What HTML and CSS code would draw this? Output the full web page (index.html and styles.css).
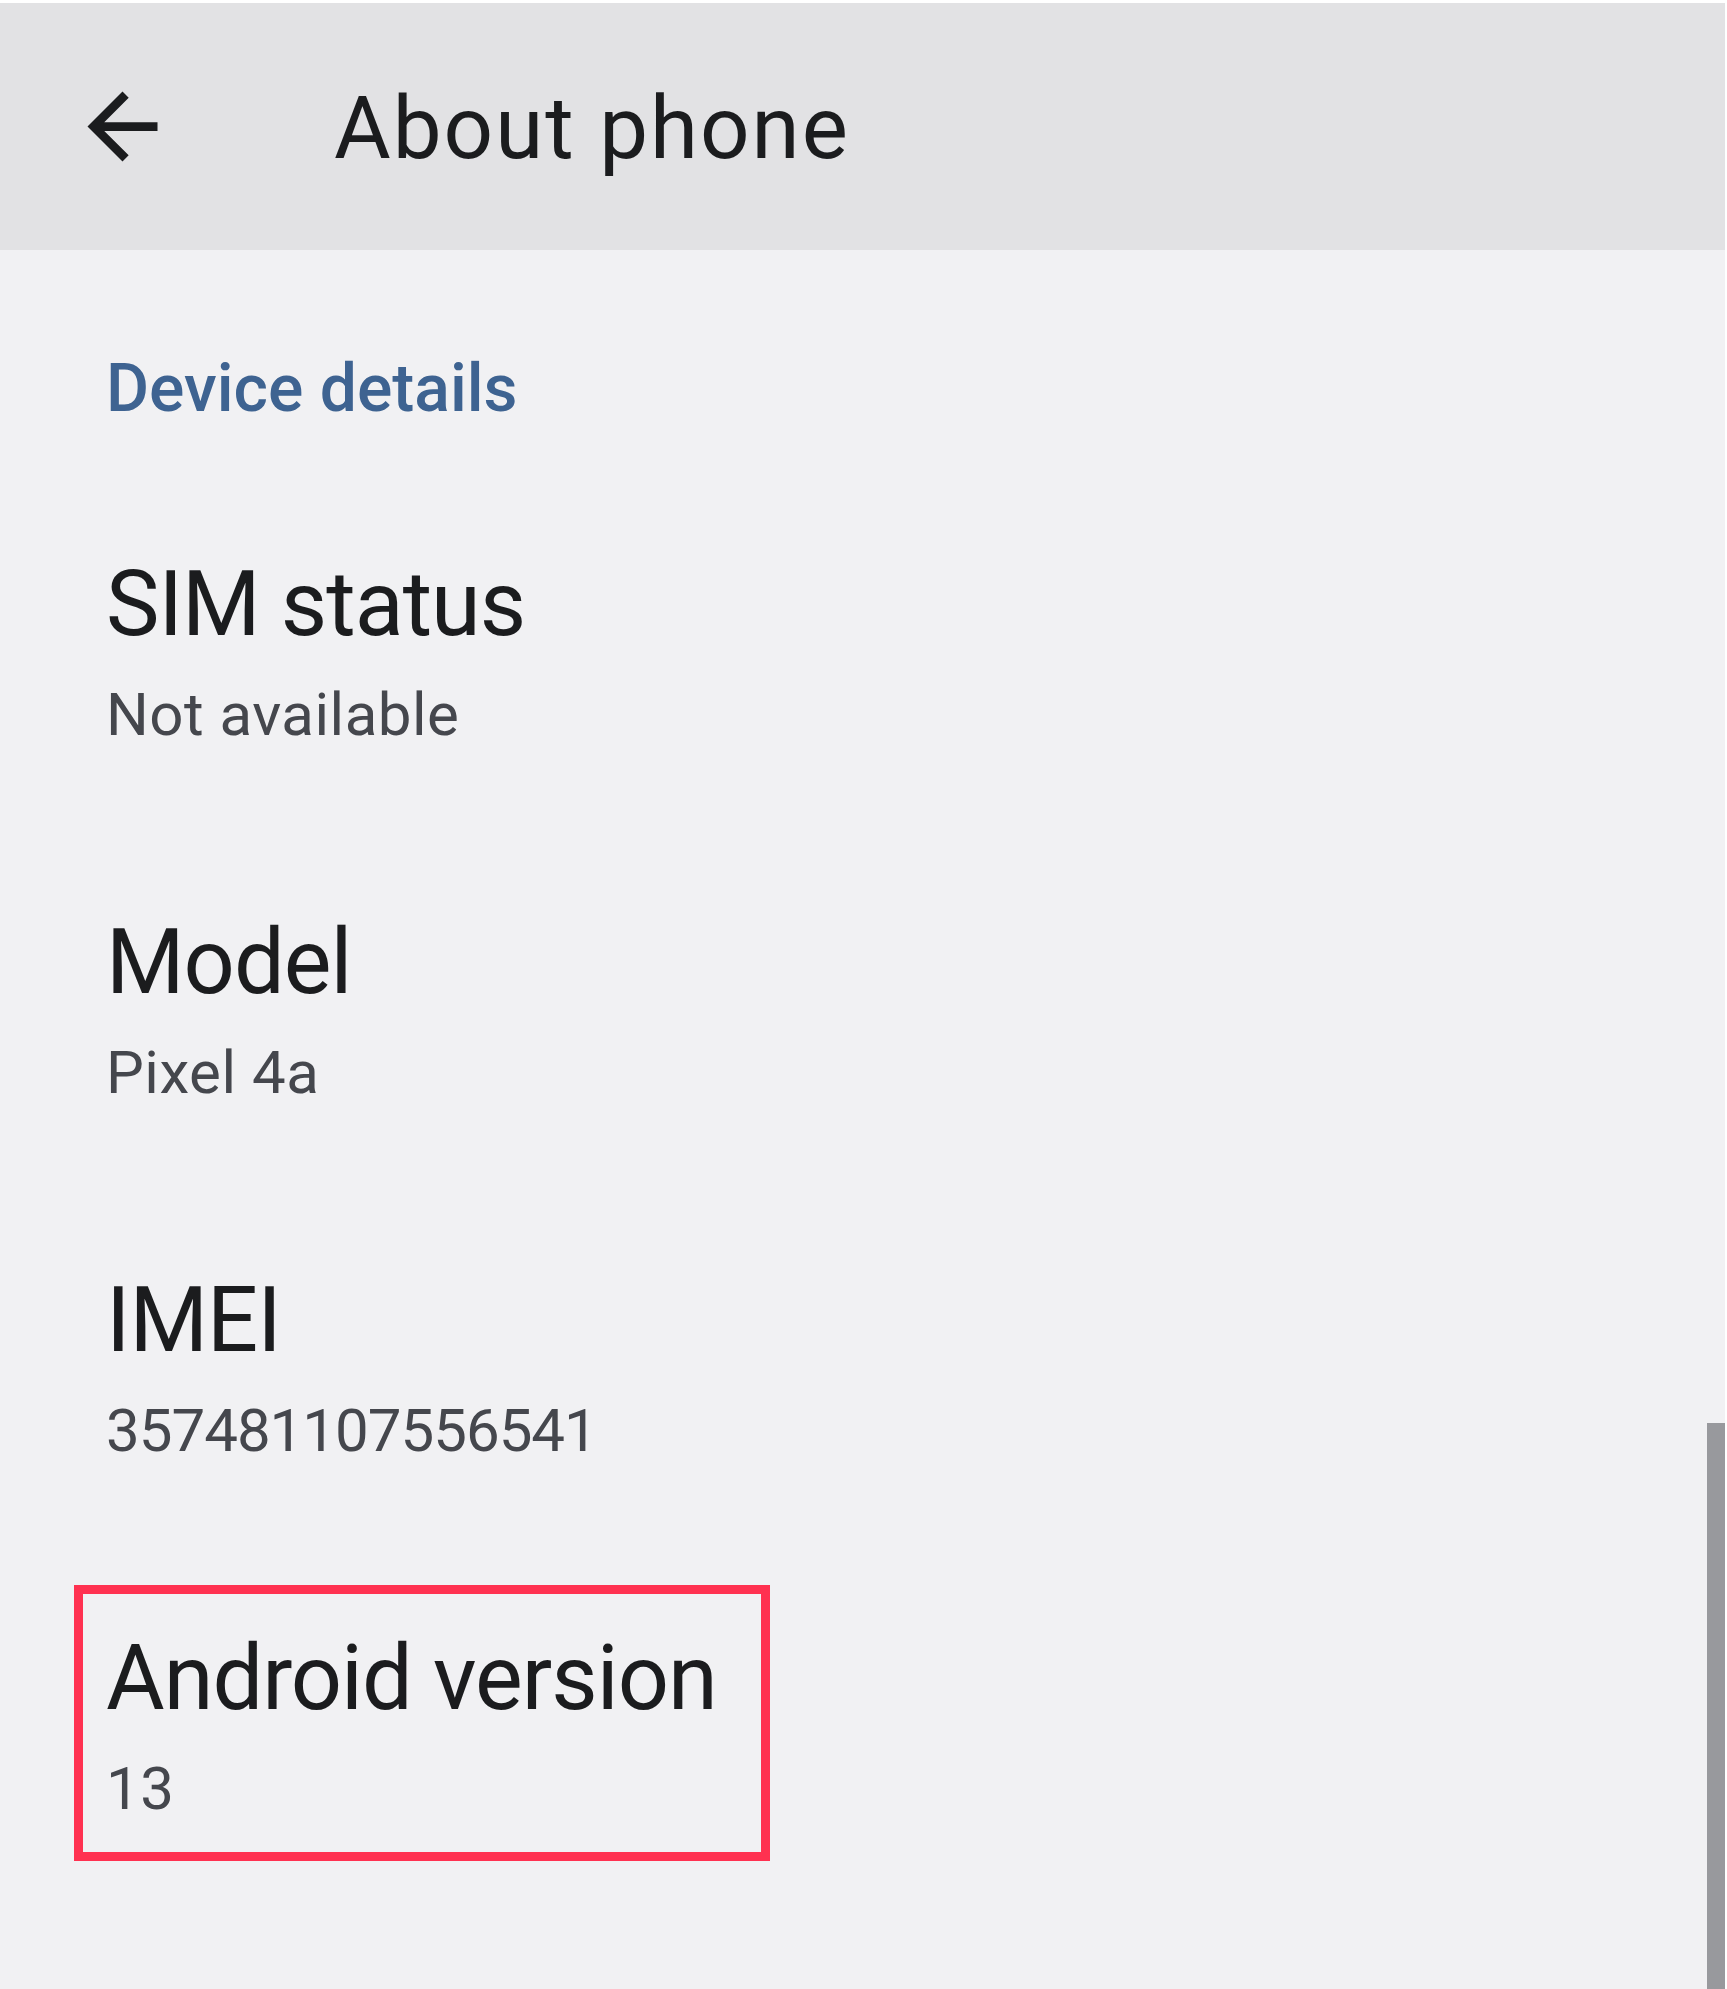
FILE: index.html
```html
<!DOCTYPE html>
<html lang="en">
<head>
<meta charset="utf-8">
<title>About phone</title>
<link rel="stylesheet" href="styles.css">
</head>
<body>
<div class="screen">
  <header class="appbar">
    <button class="back" aria-label="Back">
      <svg viewBox="0 0 24 24" width="105" height="105" aria-hidden="true"><path d="M20 11H7.83l5.59-5.59L12 4l-8 8 8 8 1.41-1.41L7.83 13H20v-2z" fill="#1b1c1e"/></svg>
    </button>
    <h1 class="appbar-title">About phone</h1>
  </header>
  <main class="content">
    <h2 class="category">Device details</h2>
    <ul class="prefs">
      <li class="pref">
        <div class="pref-title">SIM status</div>
        <div class="pref-summary">Not available</div>
      </li>
      <li class="pref">
        <div class="pref-title">Model</div>
        <div class="pref-summary">Pixel 4a</div>
      </li>
      <li class="pref">
        <div class="pref-title">IMEI</div>
        <div class="pref-summary pref-summary-digits">357481107556541</div>
      </li>
      <li class="pref pref-highlight">
        <div class="pref-title">Android version</div>
        <div class="pref-summary">13</div>
      </li>
    </ul>
    <div class="scrollbar"></div>
  </main>
</div>
</body>
</html>
```
FILE: styles.css
```css
html, body {
  margin: 0;
  padding: 0;
  background: #ffffff;
}
body {
  font-family: Roboto, "Noto Sans", "Liberation Sans", sans-serif;
}
.screen {
  margin: 3px 2px 0 0;
  height: 1986px;
  display: flex;
  flex-direction: column;
  overflow: hidden;
}
.appbar {
  height: 247px;
  flex: none;
  background: #e2e2e4;
  display: flex;
  align-items: center;
}
.back {
  width: 105px;
  height: 105px;
  margin-left: 70px;
  padding: 0;
  border: 0;
  background: transparent;
  display: flex;
}
.appbar-title {
  margin: 0 0 0 159px;
  font-size: 87px;
  line-height: 87px;
  font-weight: 400;
  letter-spacing: 2px;
  color: #1b1c1e;
  position: relative;
  top: 2px;
}
.content {
  flex: 1;
  background: #f1f1f3;
  position: relative;
  padding: 94px 0 0 106px;
}
.category {
  margin: 0;
  font-size: 66px;
  line-height: 90px;
  font-weight: 500;
  color: #3e6391;
}
.prefs {
  list-style: none;
  margin: 116px 0 0 0;
  padding: 0;
  display: flex;
  flex-direction: column;
  gap: 153px;
}
.pref {
  position: relative;
}
.pref-title {
  font-size: 90px;
  line-height: 110px;
  letter-spacing: -1px;
  color: #1b1c1e;
}
.pref-summary {
  margin-top: 15px;
  font-size: 60px;
  line-height: 80px;
  letter-spacing: 0.5px;
  color: #45474d;
}
.pref-summary-digits {
  letter-spacing: -1px;
}
.pref-highlight::after {
  content: "";
  position: absolute;
  left: -32px;
  top: -39px;
  width: 678px;
  height: 258px;
  border: 9px solid #ff3150;
  pointer-events: none;
}
.scrollbar {
  position: absolute;
  left: 1707px;
  top: 1173px;
  width: 18px;
  bottom: 0;
  background: #98999d;
}
```
